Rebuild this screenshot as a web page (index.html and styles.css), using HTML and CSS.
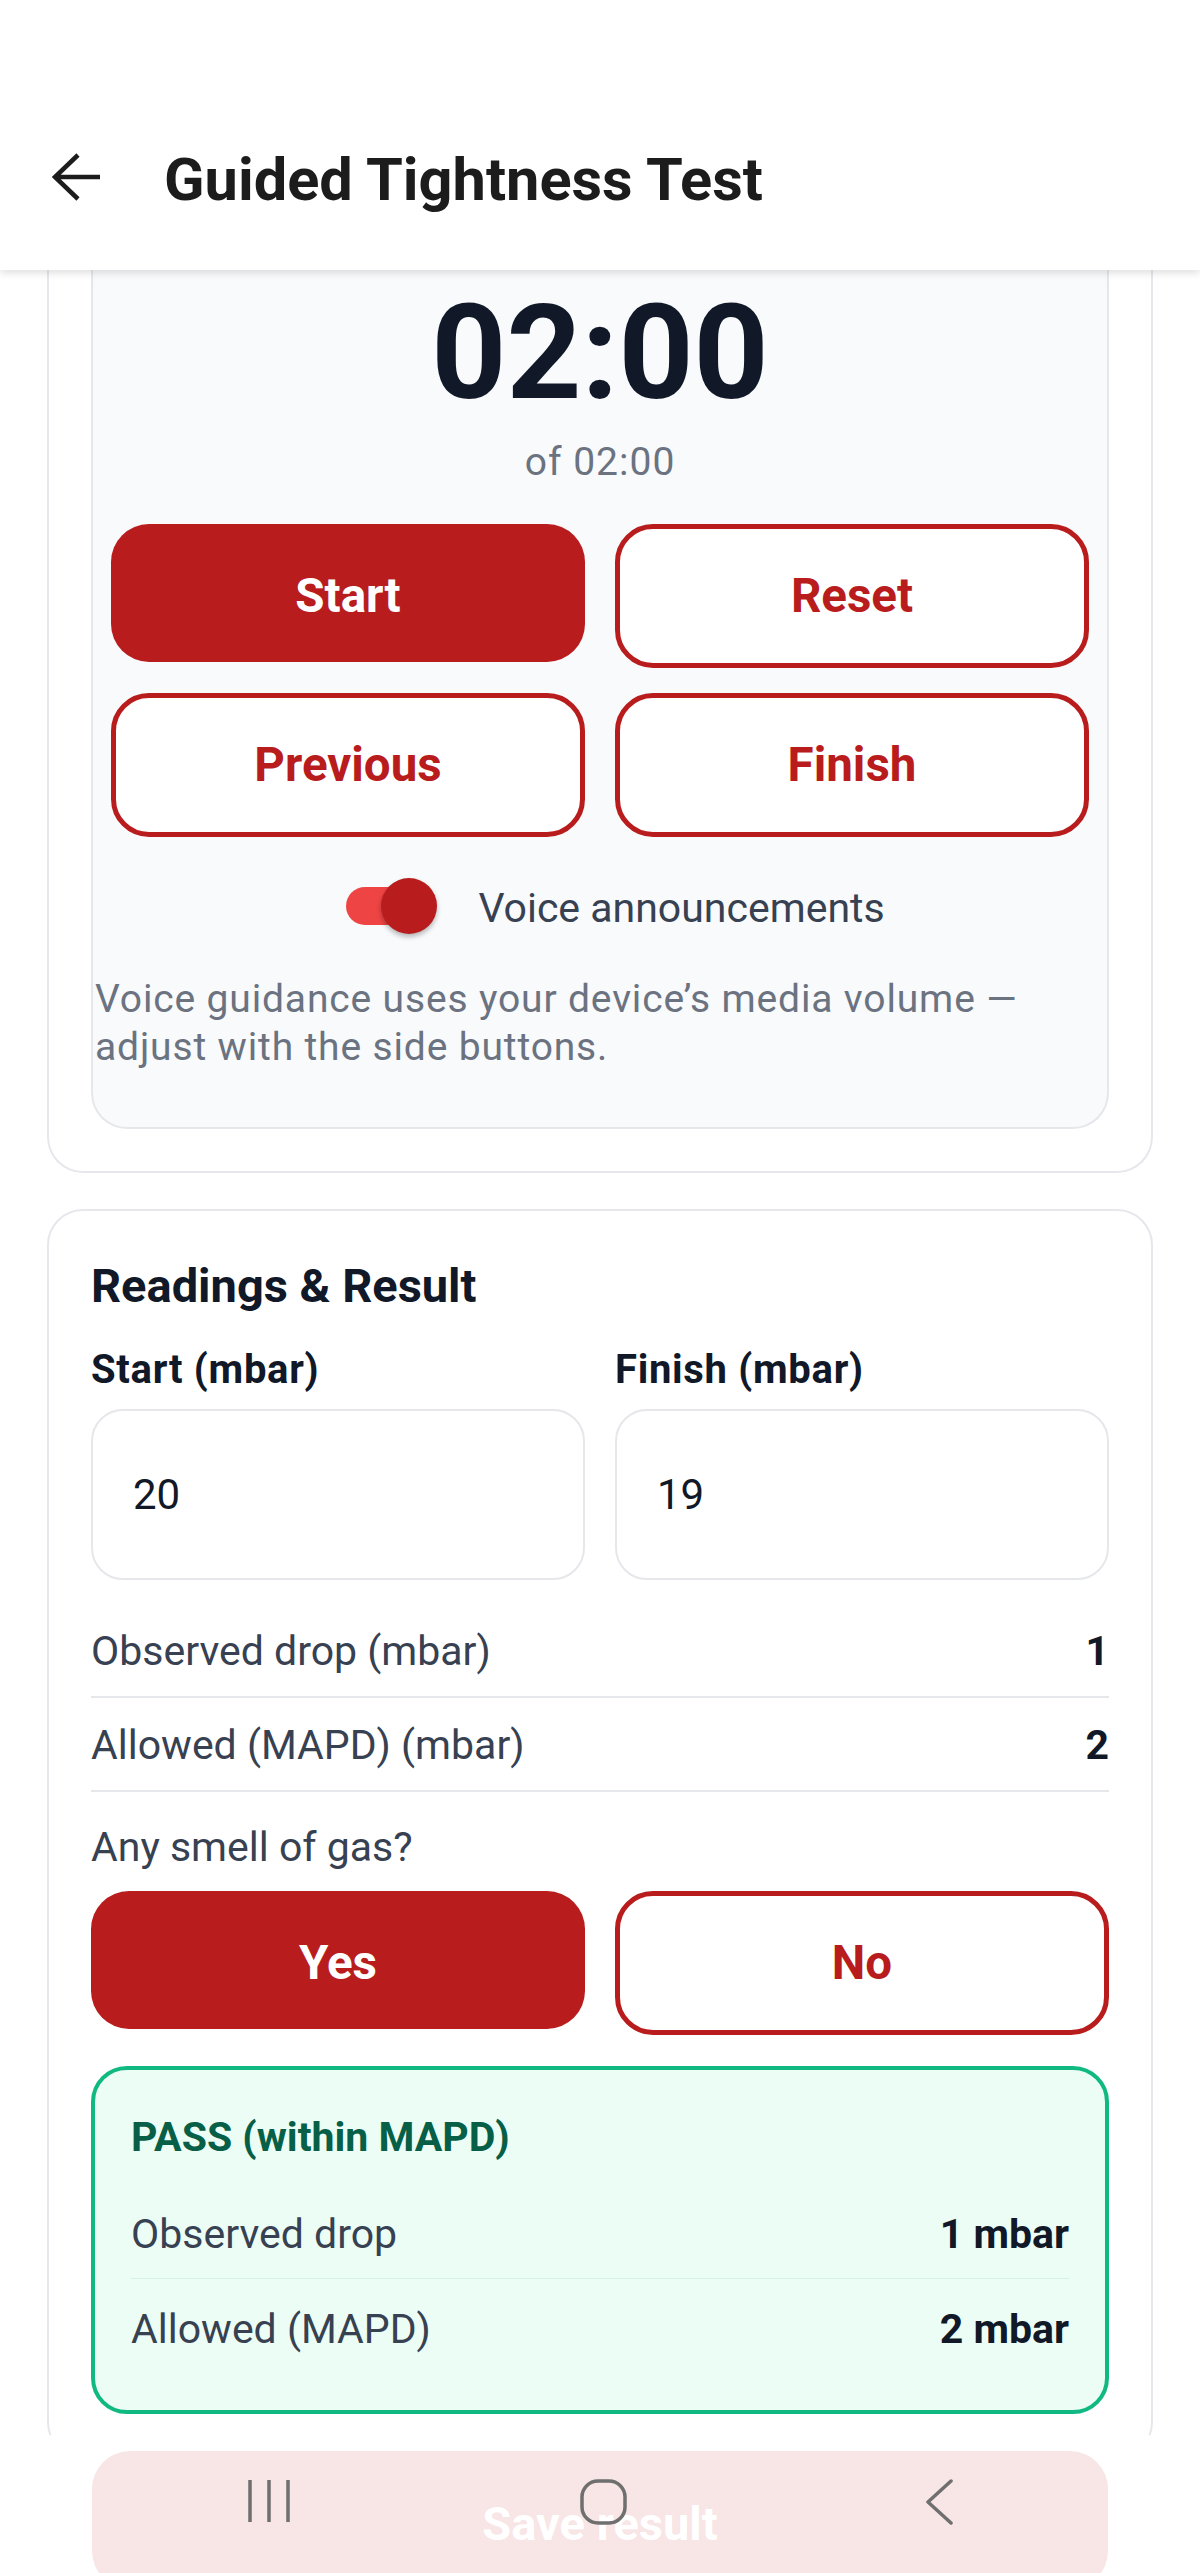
FILE: index.html
```html
<!DOCTYPE html>
<html lang="en">
<head>
<meta charset="utf-8">
<title>Guided Tightness Test</title>
<link rel="stylesheet" href="styles.css">
</head>
<body>
<div class="screen">
  <header class="appbar">
    <svg class="back" viewBox="0 0 50 48" aria-hidden="true">
      <path d="M26 2 L3 24 L26 46 M3 24 H48" fill="none" stroke="#1c1c1c" stroke-width="4.5" stroke-linejoin="miter"/>
    </svg>
    <h1 class="title">Guided Tightness Test</h1>
  </header>

  <main class="scroll">
    <section class="card card-cut">
      <div class="panel">
        <div class="timer">02:00</div>
        <div class="of">of 02:00</div>
        <div class="btn-grid">
          <button class="btn btn-fill">Start</button>
          <button class="btn btn-outline">Reset</button>
          <button class="btn btn-outline">Previous</button>
          <button class="btn btn-outline">Finish</button>
        </div>
        <div class="voice">
          <span class="switch"><span class="track"></span><span class="thumb"></span></span>
          <span class="voice-label">Voice announcements</span>
        </div>
        <p class="note">Voice guidance uses your device’s media volume — adjust with the side buttons.</p>
      </div>
    </section>

    <section class="card">
      <h2 class="card-title">Readings &amp; Result</h2>
      <div class="fields">
        <div class="field">
          <label class="field-label">Start (mbar)</label>
          <input class="input" type="text" value="20">
        </div>
        <div class="field">
          <label class="field-label">Finish (mbar)</label>
          <input class="input" type="text" value="19">
        </div>
      </div>
      <div class="stats">
        <div class="stat"><span>Observed drop (mbar)</span><b>1</b></div>
        <div class="stat"><span>Allowed (MAPD) (mbar)</span><b>2</b></div>
      </div>
      <div class="question">Any smell of gas?</div>
      <div class="choice">
        <button class="btn btn-fill">Yes</button>
        <button class="btn btn-outline">No</button>
      </div>
      <div class="result">
        <h3 class="result-title">PASS (within MAPD)</h3>
        <div class="rrows">
          <div class="rrow"><span>Observed drop</span><b>1 mbar</b></div>
          <div class="rrow"><span>Allowed (MAPD)</span><b>2 mbar</b></div>
        </div>
      </div>
    </section>
  </main>

  <footer class="footer">
    <button class="save">Save result</button>
    <div class="navbar">
      <span class="nav-item">
        <svg width="44" height="44" viewBox="0 0 44 44" aria-hidden="true">
          <path d="M3 1 V43 M22 1 V43 M41 1 V43" stroke="#6f6f6f" stroke-width="3.5" fill="none"/>
        </svg>
      </span>
      <span class="nav-item">
        <svg width="48" height="46" viewBox="0 0 48 46" aria-hidden="true">
          <rect x="2" y="2" width="43" height="42" rx="16" ry="16" stroke="#6f6f6f" stroke-width="3.5" fill="none"/>
        </svg>
      </span>
      <span class="nav-item">
        <svg width="30" height="46" viewBox="0 0 30 46" aria-hidden="true">
          <path d="M27 2 L4 23 L27 44" stroke="#6f6f6f" stroke-width="3.5" fill="none" stroke-linecap="round" stroke-linejoin="round"/>
        </svg>
      </span>
    </div>
  </footer>
</div>
</body>
</html>
```

FILE: styles.css
```css
* { box-sizing: border-box; }
html, body { margin: 0; padding: 0; background: #fff; }
body {
  width: 1200px;
  font-family: Roboto, "Noto Sans", Arial, sans-serif;
  color: #111827;
}
.screen {
  height: 2573px;
  display: flex;
  flex-direction: column;
  overflow: hidden;
  background: #fff;
}

/* App bar */
.appbar {
  flex: none;
  height: 270px;
  padding-top: 90px;
  display: flex;
  align-items: center;
  background: #fff;
  position: relative;
  z-index: 2;
  box-shadow: 0 3px 8px rgba(0, 0, 0, 0.13);
}
.back {
  flex: none;
  width: 50px;
  height: 48px;
  margin-left: 52px;
  margin-bottom: 6px;
}
.title {
  margin: 0 0 0 62px;
  font-size: 59.5px;
  font-weight: 700;
  line-height: normal;
  color: #1c1c1c;
}

/* Scroll area */
.scroll {
  flex: 1;
  min-height: 0;
  overflow: hidden;
}
.card {
  margin: 0 47px;
  border: 2px solid #e5e7eb;
  border-radius: 36px;
  padding: 47px 42px 42px;
  background: #fff;
}
.card-cut {
  border-top: none;
  border-top-left-radius: 0;
  border-top-right-radius: 0;
  padding-top: 0;
}
.card + .card { margin-top: 36px; }

/* Timer panel */
.panel {
  background: #f8fafc;
  border: 2px solid #e5e7eb;
  border-top: none;
  border-radius: 0 0 36px 36px;
  padding: 6px 18px 56px;
}
.timer {
  text-align: center;
  font-size: 131px;
  font-weight: 700;
  line-height: normal;
  color: #111827;
}
.of {
  margin-top: 9px;
  text-align: center;
  font-size: 39px;
  letter-spacing: 1px;
  line-height: normal;
  color: #6b7280;
}
.btn-grid {
  margin-top: 39px;
  display: grid;
  grid-template-columns: 1fr 1fr;
  column-gap: 30px;
  row-gap: 25px;
  align-items: start;
}
.btn {
  display: flex;
  align-items: center;
  justify-content: center;
  height: 138px;
  border-radius: 38px;
  font-family: inherit;
  font-size: 47.5px;
  font-weight: 700;
  line-height: normal;
  padding: 0;
  margin: 0;
}
.btn-fill {
  background: #b91c1c;
  color: #fff;
  border: none;
  padding-top: 6px;
}
.btn-outline {
  height: 144px;
  background: #fff;
  color: #b91c1c;
  border: 5px solid #b91c1c;
}

.voice {
  margin-top: 41px;
  display: flex;
  align-items: center;
  justify-content: center;
  gap: 41px;
  padding-left: 31px;
}
.switch {
  position: relative;
  flex: none;
  width: 91px;
  height: 56px;
}
.track {
  position: absolute;
  left: 0;
  top: 9px;
  width: 74px;
  height: 38px;
  border-radius: 19px;
  background: #ef4444;
}
.thumb {
  position: absolute;
  right: 0;
  top: 0;
  width: 56px;
  height: 56px;
  border-radius: 50%;
  background: #b91c1c;
  box-shadow: 0 3px 5px rgba(0, 0, 0, 0.28);
}
.voice-label {
  font-size: 41px;
  line-height: normal;
  color: #374151;
  padding-top: 4px;
}
.note {
  margin: 41px -16px 0;
  font-size: 39px;
  letter-spacing: 0.85px;
  line-height: 48px;
  color: #6b7280;
}

/* Readings card */
.card-title {
  margin: 0;
  font-size: 47px;
  font-weight: 700;
  line-height: normal;
  color: #111827;
}
.fields {
  margin-top: 33px;
  display: grid;
  grid-template-columns: 1fr 1fr;
  column-gap: 30px;
}
.field-label {
  display: block;
  font-size: 40px;
  letter-spacing: 0.7px;
  font-weight: 700;
  line-height: normal;
  color: #111827;
}
.input {
  display: block;
  width: 100%;
  height: 171px;
  margin: 16px 0 0;
  padding: 0 40px;
  border: 2px solid #e5e7eb;
  border-radius: 32px;
  background: #fff;
  font-family: inherit;
  font-size: 42px;
  color: #111827;
  outline: none;
}
.stats { margin-top: 24px; }
.stat {
  display: flex;
  justify-content: space-between;
  align-items: baseline;
  padding: 23px 0 21px;
  border-bottom: 2px solid #e5e7eb;
  font-size: 41px;
  line-height: normal;
  color: #374151;
}
.stat b { color: #111827; font-weight: 700; }
.question {
  margin-top: 31px;
  font-size: 41px;
  line-height: normal;
  color: #374151;
}
.choice {
  margin-top: 20px;
  display: grid;
  grid-template-columns: 1fr 1fr;
  column-gap: 30px;
  align-items: start;
}
.result {
  margin-top: 31px;
  border: 4px solid #10b981;
  border-radius: 36px;
  background: #ecfdf5;
  padding: 43px 36px 37px;
}
.result-title {
  margin: 0;
  font-size: 41px;
  font-weight: 700;
  line-height: normal;
  color: #065f46;
}
.rrows { margin-top: 23px; }
.rrow {
  display: flex;
  justify-content: space-between;
  align-items: baseline;
  padding: 26px 0 20px;
  border-bottom: 1px solid #d8f3e6;
  font-size: 41px;
  line-height: normal;
  color: #374151;
}
.rrow:last-child { border-bottom: none; }
.rrow b { color: #111827; font-weight: 700; }

/* Footer */
.footer {
  flex: none;
  height: 138px;
  padding: 16px 92px 0;
  position: relative;
  background: #fff;
  overflow: hidden;
}
.save {
  display: flex;
  align-items: center;
  justify-content: center;
  width: 100%;
  height: 138px;
  margin: 0;
  padding: 6px 0 0;
  border: none;
  border-radius: 38px;
  background: #f8e5e5;
  color: #fff;
  font-family: inherit;
  font-size: 47px;
  font-weight: 700;
}
.navbar {
  position: absolute;
  top: 44px;
  left: 202px;
  width: 804px;
  display: flex;
  justify-content: space-between;
}
.nav-item {
  width: 134px;
  display: flex;
  justify-content: center;
}
```
